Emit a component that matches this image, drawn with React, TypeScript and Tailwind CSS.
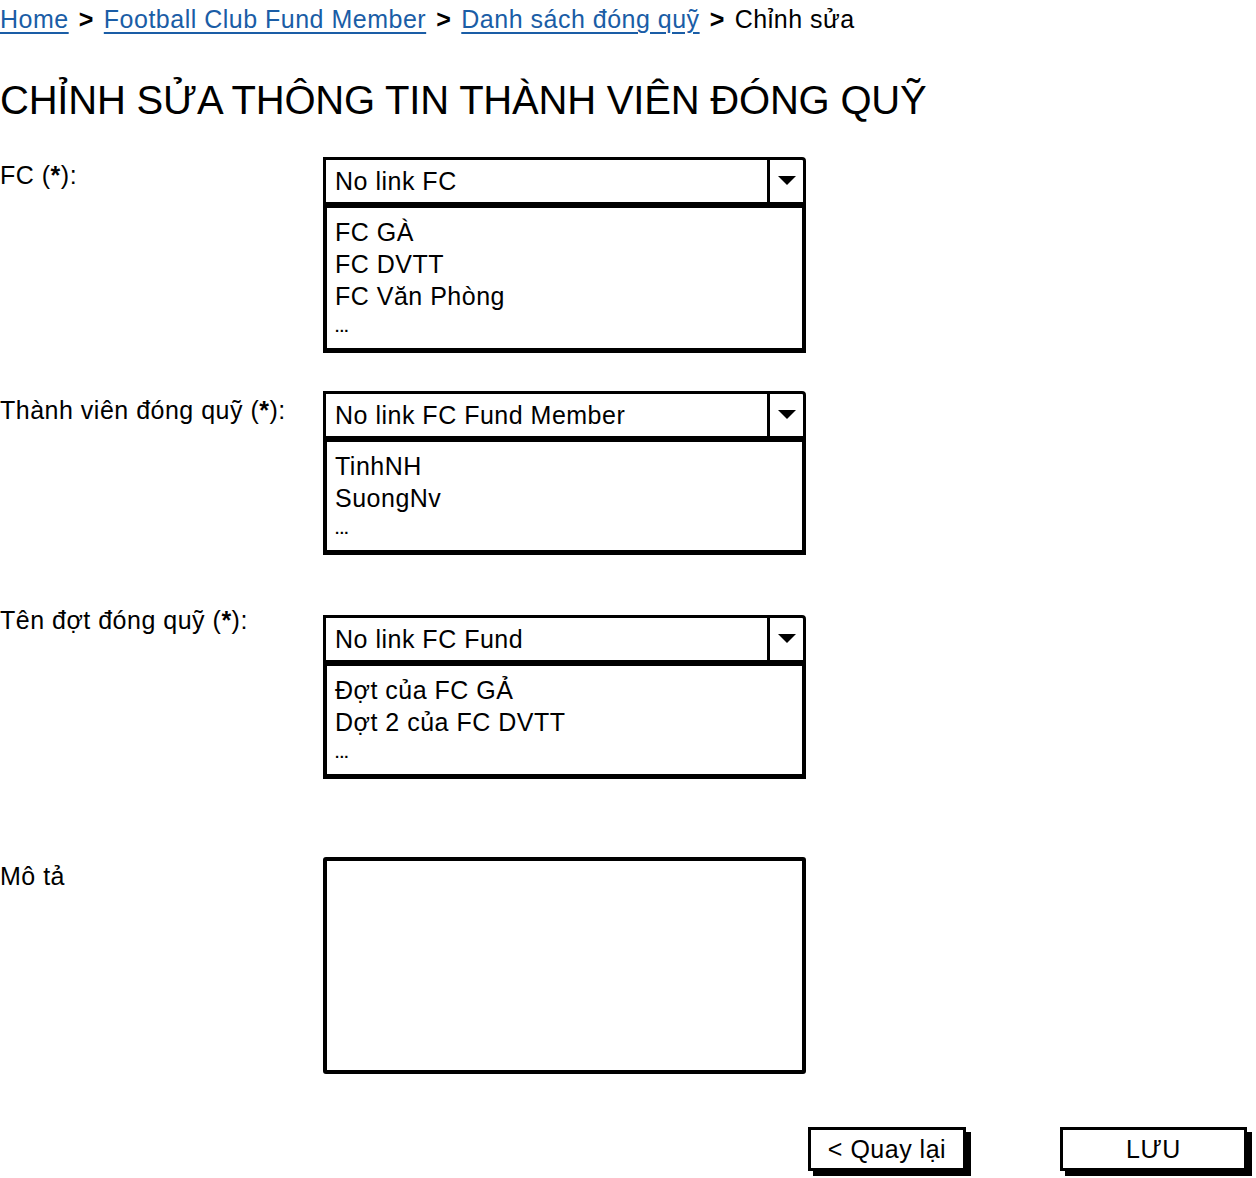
import React from "react";

const font = { fontFamily: '"Liberation Sans", Arial, sans-serif' };

function Caret() {
  return (
    <svg width="18" height="10" viewBox="0 0 18 10">
      <polygon points="0,0 18,0 9,9" fill="#000" />
    </svg>
  );
}

function SelectBox({ value, items }: { value: string; items: string[] }) {
  return (
    <div className="w-[483px]">
      <div className="flex h-[51px] border-[3px] border-b-[6px] border-black rounded-tr-[4px] bg-white">
        <div className="flex-1 flex items-center pl-[9px] text-[25px] tracking-[0.5px] leading-none text-black">
          {value}
        </div>
        <div className="w-[36px] border-l-[3px] border-black flex items-center justify-center">
          <Caret />
        </div>
      </div>
      <div className="border-[4px] border-t-0 border-b-[5px] border-black px-[8px] pt-[8px] pb-[6px] text-[25px] tracking-[0.5px] leading-[32px] text-black">
        {items.map((it) => (
          <div key={it}>{it}</div>
        ))}
        <div className="text-[15px] leading-[30px] font-bold">...</div>
      </div>
    </div>
  );
}

function Crumb({ children }: { children: React.ReactNode }) {
  return (
    <a href="#" className="text-[#1a5da6] underline underline-offset-[4px] decoration-[2px]">
      {children}
    </a>
  );
}

function Sep() {
  return <span className="mx-[10px] font-bold">&gt;</span>;
}

function Label({ text, className }: { text: string; className?: string }) {
  return (
    <div className={"w-[323px] text-[25px] tracking-[0.5px] leading-[30px] " + (className ?? "")}>
      {text}
      {text !== "Mô tả" && (
        <>
          {" "}(<b>*</b>):
        </>
      )}
    </div>
  );
}

export default function App() {
  return (
    <div className="w-[1256px] h-[1178px] bg-white text-black" style={font}>
      <div className="flex items-center h-[40px] text-[25px] tracking-[0.5px] whitespace-nowrap">
        <Crumb>Home</Crumb>
        <Sep />
        <Crumb>Football Club Fund Member</Crumb>
        <Sep />
        <Crumb>Danh sách đóng quỹ</Crumb>
        <Sep />
        <span>Chỉnh sửa</span>
      </div>

      <h1 className="mt-[38px] text-[40px] leading-[44px] whitespace-nowrap tracking-[-0.2px]">
        CHỈNH SỬA THÔNG TIN THÀNH VIÊN ĐÓNG QUỸ
      </h1>

      <div className="mt-[35px] flex">
        <Label text="FC" className="pt-[3px]" />
        <SelectBox value="No link FC" items={["FC GÀ", "FC DVTT", "FC Văn Phòng"]} />
      </div>

      <div className="mt-[38px] flex">
        <Label text="Thành viên đóng quỹ" className="pt-[4px]" />
        <SelectBox value="No link FC Fund Member" items={["TinhNH", "SuongNv"]} />
      </div>

      <div className="mt-[50px] flex">
        <Label text="Tên đợt đóng quỹ" />
        <div className="mt-[10px]">
          <SelectBox value="No link FC Fund" items={["Đợt của FC GẢ", "Dợt 2 của FC DVTT"]} />
        </div>
      </div>

      <div className="mt-[78px] flex">
        <Label text="Mô tả" className="pt-[4px]" />
        <div className="w-[483px] h-[217px] border-[4px] border-black rounded-[3px]" />
      </div>

      <div className="mt-[53px] flex">
        <div className="w-[808px]" />
        <button className="w-[158px] h-[44px] border-[3px] border-black bg-white shadow-[5px_5px_0_#000] text-[25px] tracking-[0.5px] leading-none">
          &lt; Quay lại
        </button>
        <div className="w-[94px]" />
        <button className="w-[187px] h-[44px] border-[3px] border-black bg-white shadow-[5px_5px_0_#000] text-[25px] tracking-[0.5px] leading-none">
          LƯU
        </button>
      </div>
    </div>
  );
}
